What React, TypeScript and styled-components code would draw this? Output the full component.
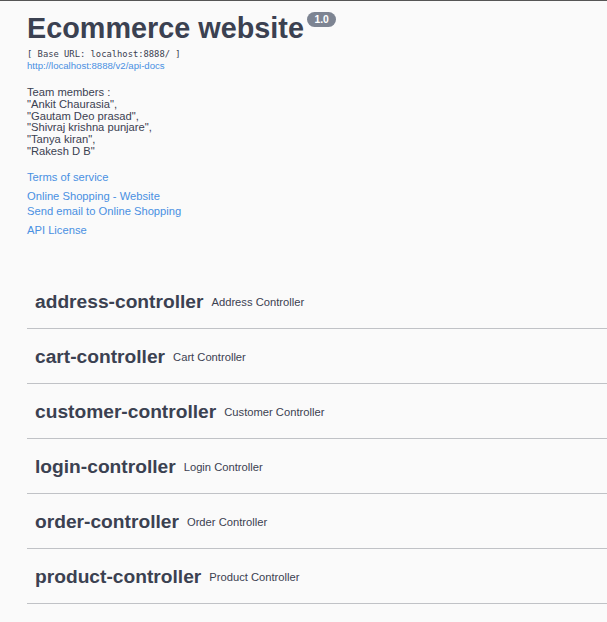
import React from 'react'
import styled, { createGlobalStyle } from 'styled-components'

const GlobalStyle = createGlobalStyle`
  html, body {
    margin: 0;
    padding: 0;
    background: #fafafa;
  }
  body {
    font-family: "Liberation Sans", Arial, sans-serif;
    color: #3b4151;
  }
`

const Page = styled.div`
  border-top: 1px solid #555;
  min-height: 621px;
  padding-left: 27px;
  overflow: hidden;
`

const Info = styled.div`
  padding-top: 9px;
`

const Title = styled.h2`
  margin: 0;
  font-size: 28.8px;
  font-weight: 700;
  line-height: 36px;
  color: #3b4151;
  display: flex;
  align-items: flex-start;
`

const Badge = styled.span`
  margin-left: 3px;
  margin-top: 2px;
  background: #7d8492;
  color: #fff;
  font-size: 10.4px;
  line-height: 11px;
  font-weight: 700;
  padding: 2px 7.5px;
  border-radius: 45px;
`

const BaseUrl = styled.pre`
  margin: 2px 0 0;
  font-family: "DejaVu Sans Mono", monospace;
  font-size: 8.8px;
  line-height: 12px;
  color: #3b4151;
`

const Link = styled.a`
  display: block;
  color: #4990e2;
  text-decoration: none;
  font-size: ${(p: { small?: boolean }) => (p.small ? '9.6px' : '11.2px')};
  line-height: ${(p: { small?: boolean }) => (p.small ? '12px' : '15px')};
`

const Description = styled.div`
  margin-top: 15px;
  font-size: 11.2px;
  line-height: 11.8px;
`

const LinkGroup = styled.div`
  margin-top: ${(p: { gap: number }) => p.gap}px;
`

const Tags = styled.div`
  margin-top: 36px;
`

const TagRow = styled.div`
  display: flex;
  align-items: center;
  gap: 8px;
  height: 52px;
  padding: 2px 0 0 8px;
  border-bottom: 1px solid rgba(59, 65, 81, 0.3);
  margin-right: -20px;
`

const TagName = styled.span`
  font-size: 19.2px;
  font-weight: 700;
  color: #3b4151;
`

const TagDesc = styled.small`
  font-size: 11.2px;
  color: #3b4151;
`

const members = [
  'Team members :',
  '"Ankit Chaurasia",',
  '"Gautam Deo prasad",',
  '"Shivraj krishna punjare",',
  '"Tanya kiran",',
  '"Rakesh D B"',
]

const tags = [
  ['address-controller', 'Address Controller'],
  ['cart-controller', 'Cart Controller'],
  ['customer-controller', 'Customer Controller'],
  ['login-controller', 'Login Controller'],
  ['order-controller', 'Order Controller'],
  ['product-controller', 'Product Controller'],
]

export default function App() {
  return (
    <Page>
      <GlobalStyle />
      <Info>
        <Title>
          Ecommerce website
          <Badge>1.0</Badge>
        </Title>
        <BaseUrl>[ Base URL: localhost:8888/ ]</BaseUrl>
        <Link small href="#">http://localhost:8888/v2/api-docs</Link>
        <Description>
          {members.map((m) => (
            <div key={m}>{m}</div>
          ))}
        </Description>
        <LinkGroup gap={12}>
          <Link href="#">Terms of service</Link>
        </LinkGroup>
        <LinkGroup gap={4}>
          <Link href="#">Online Shopping - Website</Link>
          <Link href="#">Send email to Online Shopping</Link>
        </LinkGroup>
        <LinkGroup gap={4}>
          <Link href="#">API License</Link>
        </LinkGroup>
      </Info>
      <Tags>
        {tags.map(([name, desc]) => (
          <TagRow key={name}>
            <TagName>{name}</TagName>
            <TagDesc>{desc}</TagDesc>
          </TagRow>
        ))}
      </Tags>
    </Page>
  )
}
